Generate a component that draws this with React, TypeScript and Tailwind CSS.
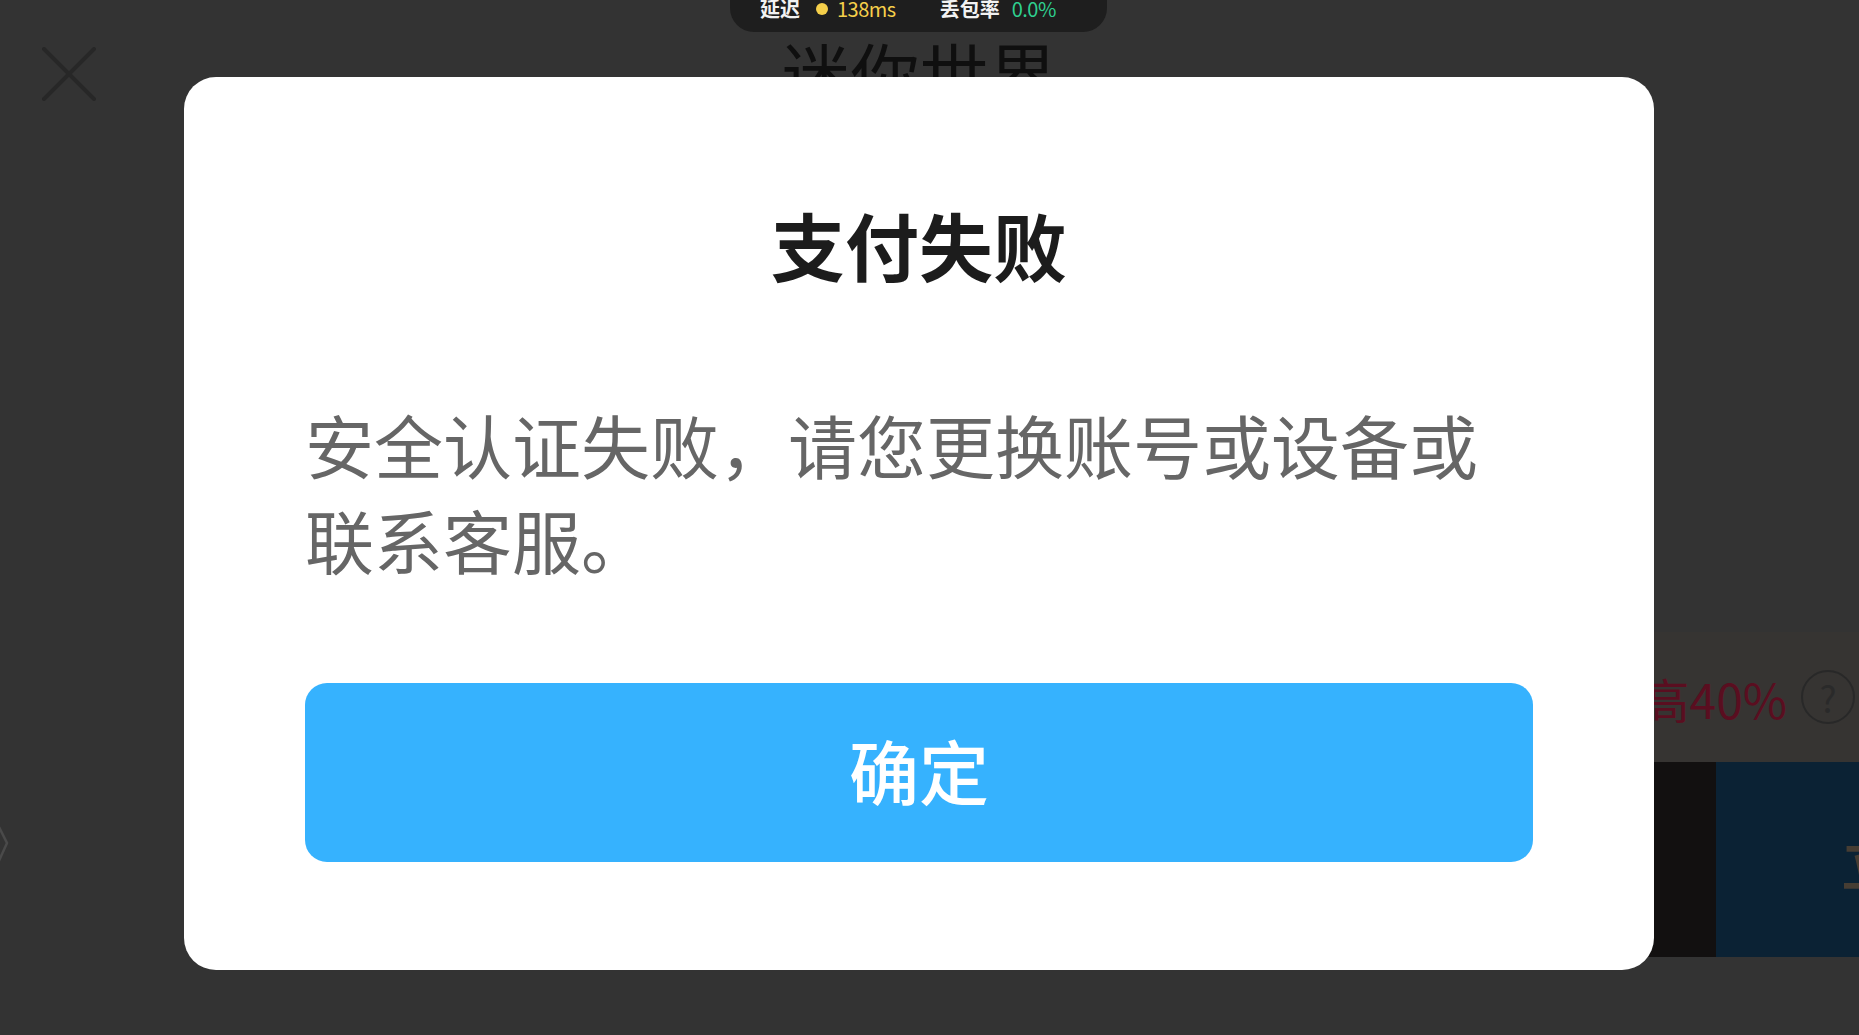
import React from "react";

export default function App() {
  return (
    <div className="relative w-[1859px] h-[1035px] overflow-hidden bg-[#333333] font-['Noto_Sans_CJK_SC','Noto_Sans',sans-serif]">
      {/* background page (dimmed) */}
      <div className="flex flex-col h-full">
        <div className="flex h-[140px]">
          <div className="pl-[42px] pt-[47px]">
            <svg width="56" height="56" viewBox="0 0 56 56">
              <path d="M2 2 L52 52 M52 2 L2 52" stroke="#272727" strokeWidth="4" strokeLinecap="round" />
            </svg>
          </div>
          <div className="flex-1 flex justify-center pt-[38px] pr-[118px]">
            <span className="text-[69px] leading-none font-normal text-[#0f0f0f]">迷你世界</span>
          </div>
        </div>
        <div className="h-[492px]" />
        <div className="flex justify-between">
          <div className="pt-[191px]">
            <svg width="10" height="44" viewBox="0 0 10 44">
              <path d="M-2 2 L7 20 L-2 40" stroke="#4a4a4a" strokeWidth="2.5" fill="none" />
            </svg>
          </div>
          <div className="flex flex-col w-[600px]">
            <div className="h-[130px] bg-[#363432] flex items-center justify-end pr-[4px]">
              <span className="text-[48px] leading-none text-[#5a0e20] pt-[2px]">提升高40%</span>
              <div className="ml-[14px] w-[54px] h-[54px] rounded-full border-[2px] border-[#282828] flex items-center justify-center text-[36px] leading-none text-[#2a2a2a]">?</div>
            </div>
            <div className="h-[195px] flex">
              <div className="flex-1 bg-[#121010]" />
              <div className="w-[143px] bg-[#0b2234] flex items-center justify-end overflow-hidden">
                <span className="text-[60px] leading-none text-[#463d33] -mr-[102px] font-medium">立即</span>
              </div>
            </div>
          </div>
        </div>
      </div>

      {/* network status HUD */}
      <div className="absolute left-[730px] top-[-14px] w-[377px] h-[46px] rounded-b-[24px] bg-[#1e1e1e] flex items-center pl-[30px] text-[20px] leading-none">
        <span className="text-[#f2f2f2] font-bold">延迟</span>
        <span className="ml-[16px] w-[12px] h-[12px] rounded-full bg-[#f5cf4a]" />
        <span className="ml-[9px] text-[#f5cf4a] tracking-[-0.5px]">138ms</span>
        <span className="ml-[44px] text-[#f2f2f2] font-bold">丢包率</span>
        <span className="ml-[12px] text-[#2ed08f] tracking-[-0.5px]">0.0%</span>
      </div>

      {/* dialog */}
      <div className="absolute left-[184px] top-[77px] w-[1470px] h-[893px] rounded-[32px] bg-white flex flex-col items-center pt-[130px] px-[121px]">
        <h1 className="text-[74px] leading-none font-bold text-[#1c1c1c]">支付失败</h1>
        <p className="mt-[116px] w-full text-[69px] leading-[95px] text-[#666666]">
          安全认证失败，请您更换账号或设备或联系客服。
        </p>
        <button className="mt-[96px] w-full h-[179px] rounded-[22px] bg-[#36b2fe] text-white text-[70px] leading-none font-medium pb-[6px]">
          确定
        </button>
      </div>
    </div>
  );
}
